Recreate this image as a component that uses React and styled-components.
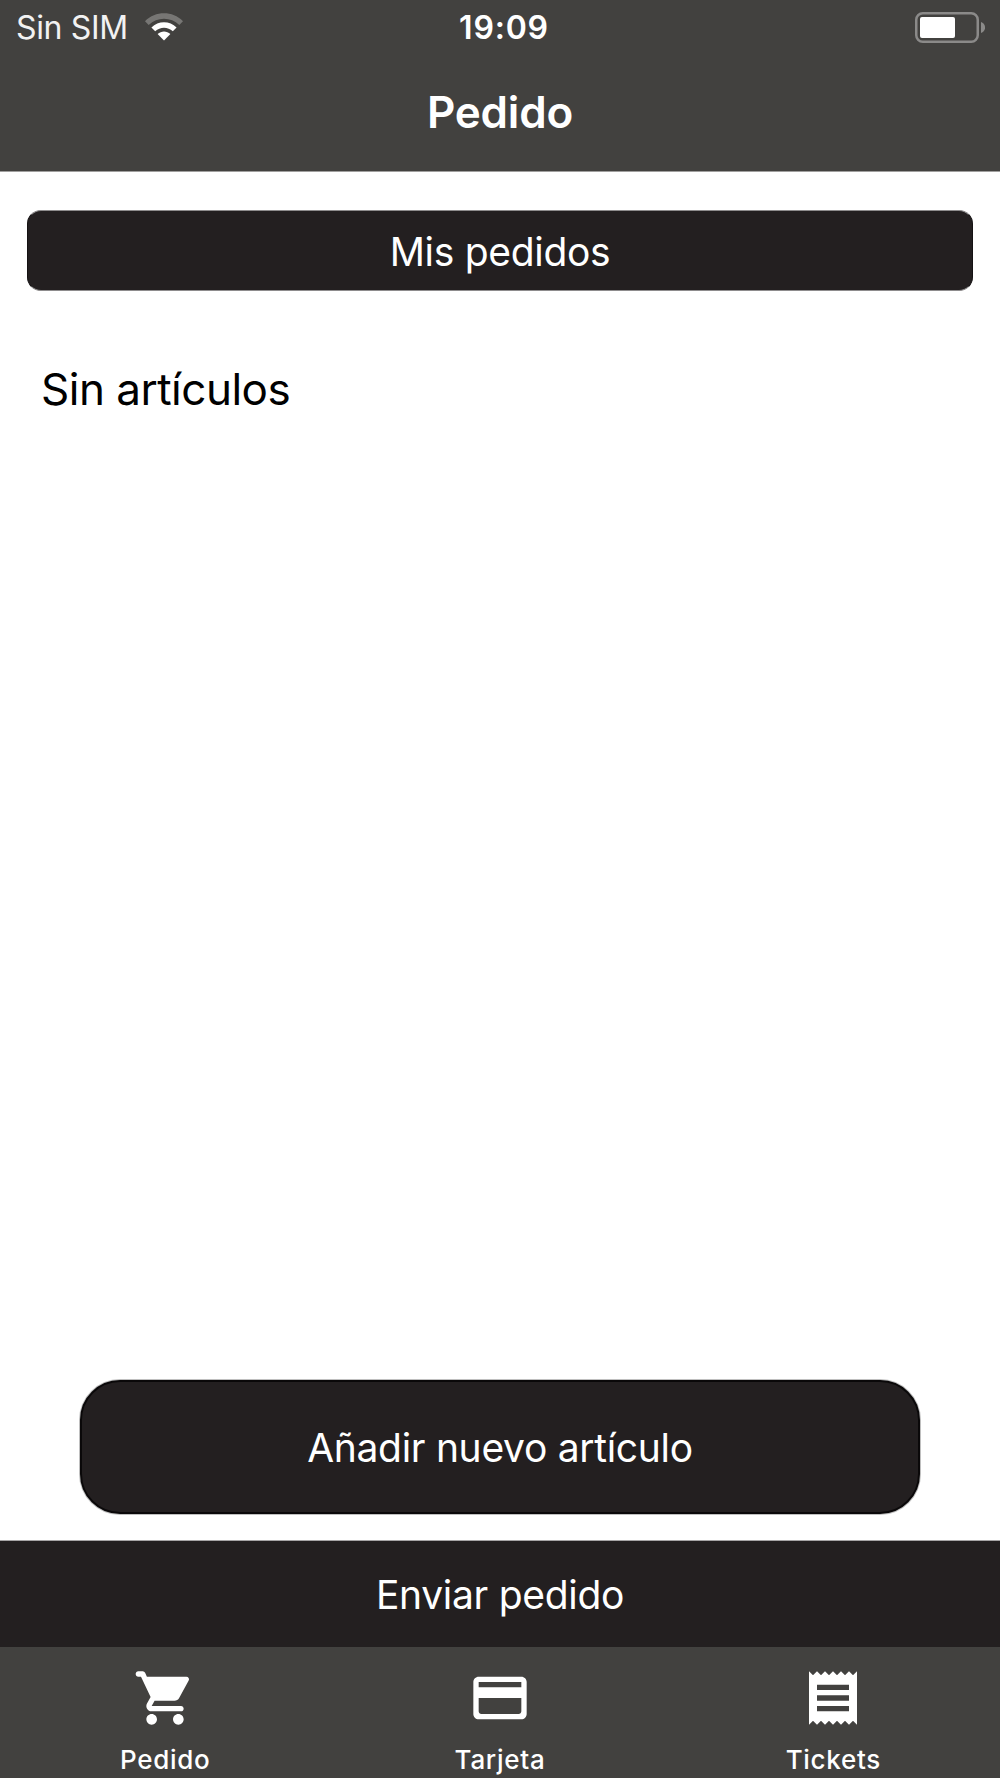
import React from 'react'
import styled, { createGlobalStyle } from 'styled-components'

const GlobalStyle = createGlobalStyle`
  * {
    box-sizing: border-box;
  }

  body {
    margin: 0;
    background: #fff;
    font-family: Inter, 'Liberation Sans', sans-serif;
  }
`

const Screen = styled.div`
  display: flex;
  flex-direction: column;
  width: 1000px;
  height: 1778px;
  background: #fff;
`

const Header = styled.header`
  height: 172px;
  background: #42413f;
  border-bottom: 1px solid #a09f9e;
  color: #fff;
`

const StatusBar = styled.div`
  display: grid;
  grid-template-columns: 1fr auto 1fr;
  align-items: center;
  height: 54px;
  padding: 0 15px 0 16px;
`

const Carrier = styled.div`
  display: flex;
  align-items: center;
  gap: 17px;
  font-size: 32px;
  letter-spacing: -0.35px;
  color: #f2f2f2;
`

const Clock = styled.time`
  font-size: 32px;
  font-weight: 600;
  padding-left: 7px;
  padding-top: 1px;
  letter-spacing: 0.8px;
`

const BatteryIcon = styled.svg`
  justify-self: end;
`

const Title = styled.h1`
  margin: 0;
  height: 116px;
  line-height: 116px;
  text-align: center;
  font-size: 44px;
  font-weight: 600;
  letter-spacing: -0.2px;
`

const Content = styled.main`
  flex: 1;
  display: flex;
  flex-direction: column;
  padding: 38px 27px 27px;
`

const Button = styled.button`
  display: flex;
  align-items: center;
  justify-content: center;
  padding: 0;
  border: 0;
  background: #231f20;
  color: #fff;
  font-family: inherit;
  font-size: 39px;
  letter-spacing: -0.3px;
`

const OrdersButton = styled(Button)`
  height: 81px;
  border: 1px solid #151213;
  border-top-color: #8e8c8d;
  border-bottom-color: #8e8c8d;
  border-radius: 14px;
  padding-top: 1px;
`

const AddButton = styled(Button)`
  height: 134px;
  margin: auto 53px 0;
  border: 2px solid #0a0809;
  border-radius: 40px;
  box-shadow: 0 0 0 1px rgba(0, 0, 0, 0.25);
`

const SendButton = styled(Button)`
  height: 106px;
  box-shadow: 0 -1px 0 #a7a5a6;
`

const Empty = styled.p`
  margin: 71px 0 0 14px;
  line-height: 54px;
  font-size: 44px;
  letter-spacing: -0.5px;
  color: #000;
`

const TabBar = styled.nav`
  display: grid;
  grid-template-columns: repeat(3, 1fr);
  height: 131px;
  background: #42413f;
`

const Tab = styled.a`
  display: flex;
  flex-direction: column;
  align-items: center;
  padding-top: 19px;
  color: #fff;
  font-size: 26px;
  font-weight: 500;
  line-height: 32px;
  letter-spacing: 0.7px;

  &:first-child {
    padding-right: 3px;
  }

  svg {
    margin-bottom: 14px;
    fill: currentColor;
  }
`

const WifiIcon = () => (
  <svg width='38' height='28' viewBox='0 0 38 28' fill='#fff'>
    <path fill='#777674' d='M0 8.2C10.5-2.4 27.5-2.4 38 8.2L34.3 12C25.8 3.6 12.2 3.6 3.7 12Z' />
    <path d='M6.4 14.4C13.3 7.4 24.7 7.4 31.6 14.4L27.8 18.3C22.9 13.5 15.1 13.5 10.2 18.3Z' />
    <path d='M12.6 21C16.2 17.600 21.800 17.600 25.400 21L19 27.400Z' />
  </svg>
)

const tabs = [
  {
    label: 'Pedido',
    icon: 'M7 18c-1.1 0-1.990.9-1.990 2S5.9 22 7 22s2-.9 2-2-.9-2-2-2zM1 3c0 .55.45 1 1 1h1l3.6 7.59-1.35 2.44C4.52 15.37 5.48 17 7 17h11c.55 0 1-.45 1-1s-.45-1-1-1H7l1.1-2h7.45c.75 0 1.41-.41 1.75-1.03l3.58-6.49A.996.996 0 0 0 20.01 4H5.21l-.67-1.43a.993.993 0 0 0-.9-.57H2c-.55 0-1 .45-1 1zm16 15c-1.1 0-1.99.9-1.99 2s.89 2 1.99 2 2-.9 2-2-.9-2-2-2z'
  },
  {
    label: 'Tarjeta',
    icon: 'M20 4H4c-1.11 0-1.99.89-1.99 2L2 18c0 1.11.89 2 2 2h16c1.11 0 2-.89 2-2V6c0-1.11-.89-2-2-2zm-1 14H5c-.55 0-1-.45-1-1v-5h16v5c0 .55-.45 1-1 1zm1-10H4V6h16v2z'
  },
  {
    label: 'Tickets',
    icon: 'M18 17H6v-2h12v2zm0-4H6v-2h12v2zm0-4H6V7h12v2zM3 22l1.5-1.5L6 22l1.5-1.5L9 22l1.5-1.5L12 22l1.5-1.5L15 22l1.5-1.5L18 22l1.5-1.5L21 22V2l-1.5 1.5L18 2l-1.5 1.5L15 2l-1.5 1.5L12 2l-1.5 1.5L9 2 7.5 3.5 6 2 4.5 3.5 3 2v20z'
  }
]

const App = () => (
  <Screen>
    <GlobalStyle />
    <Header>
      <StatusBar>
        <Carrier>
          <span>Sin SIM</span>
          <WifiIcon />
        </Carrier>
        <Clock>19:09</Clock>
        <BatteryIcon width='70' height='31' viewBox='0 0 70 31' fill='none'>
          <rect x='1.25' y='1.25' width='61.5' height='28.5' rx='6.5' stroke='#8b8a89' strokeWidth='2.5' />
          <rect x='5' y='5' width='35' height='21' rx='2' fill='#fff' />
          <path d='M66 10C71.5 12 71.5 19 66 21Z' fill='#8b8a89' />
        </BatteryIcon>
      </StatusBar>
      <Title>Pedido</Title>
    </Header>
    <Content>
      <OrdersButton>Mis pedidos</OrdersButton>
      <Empty>Sin artículos</Empty>
      <AddButton>Añadir nuevo artículo</AddButton>
    </Content>
    <SendButton>Enviar pedido</SendButton>
    <TabBar>
      {tabs.map(({ label, icon }) => (
        <Tab key={label}>
          <svg width='64' height='64' viewBox='0 0 24 24'>
            <path d={icon} />
          </svg>
          {label}
        </Tab>
      ))}
    </TabBar>
  </Screen>
)

export default App
